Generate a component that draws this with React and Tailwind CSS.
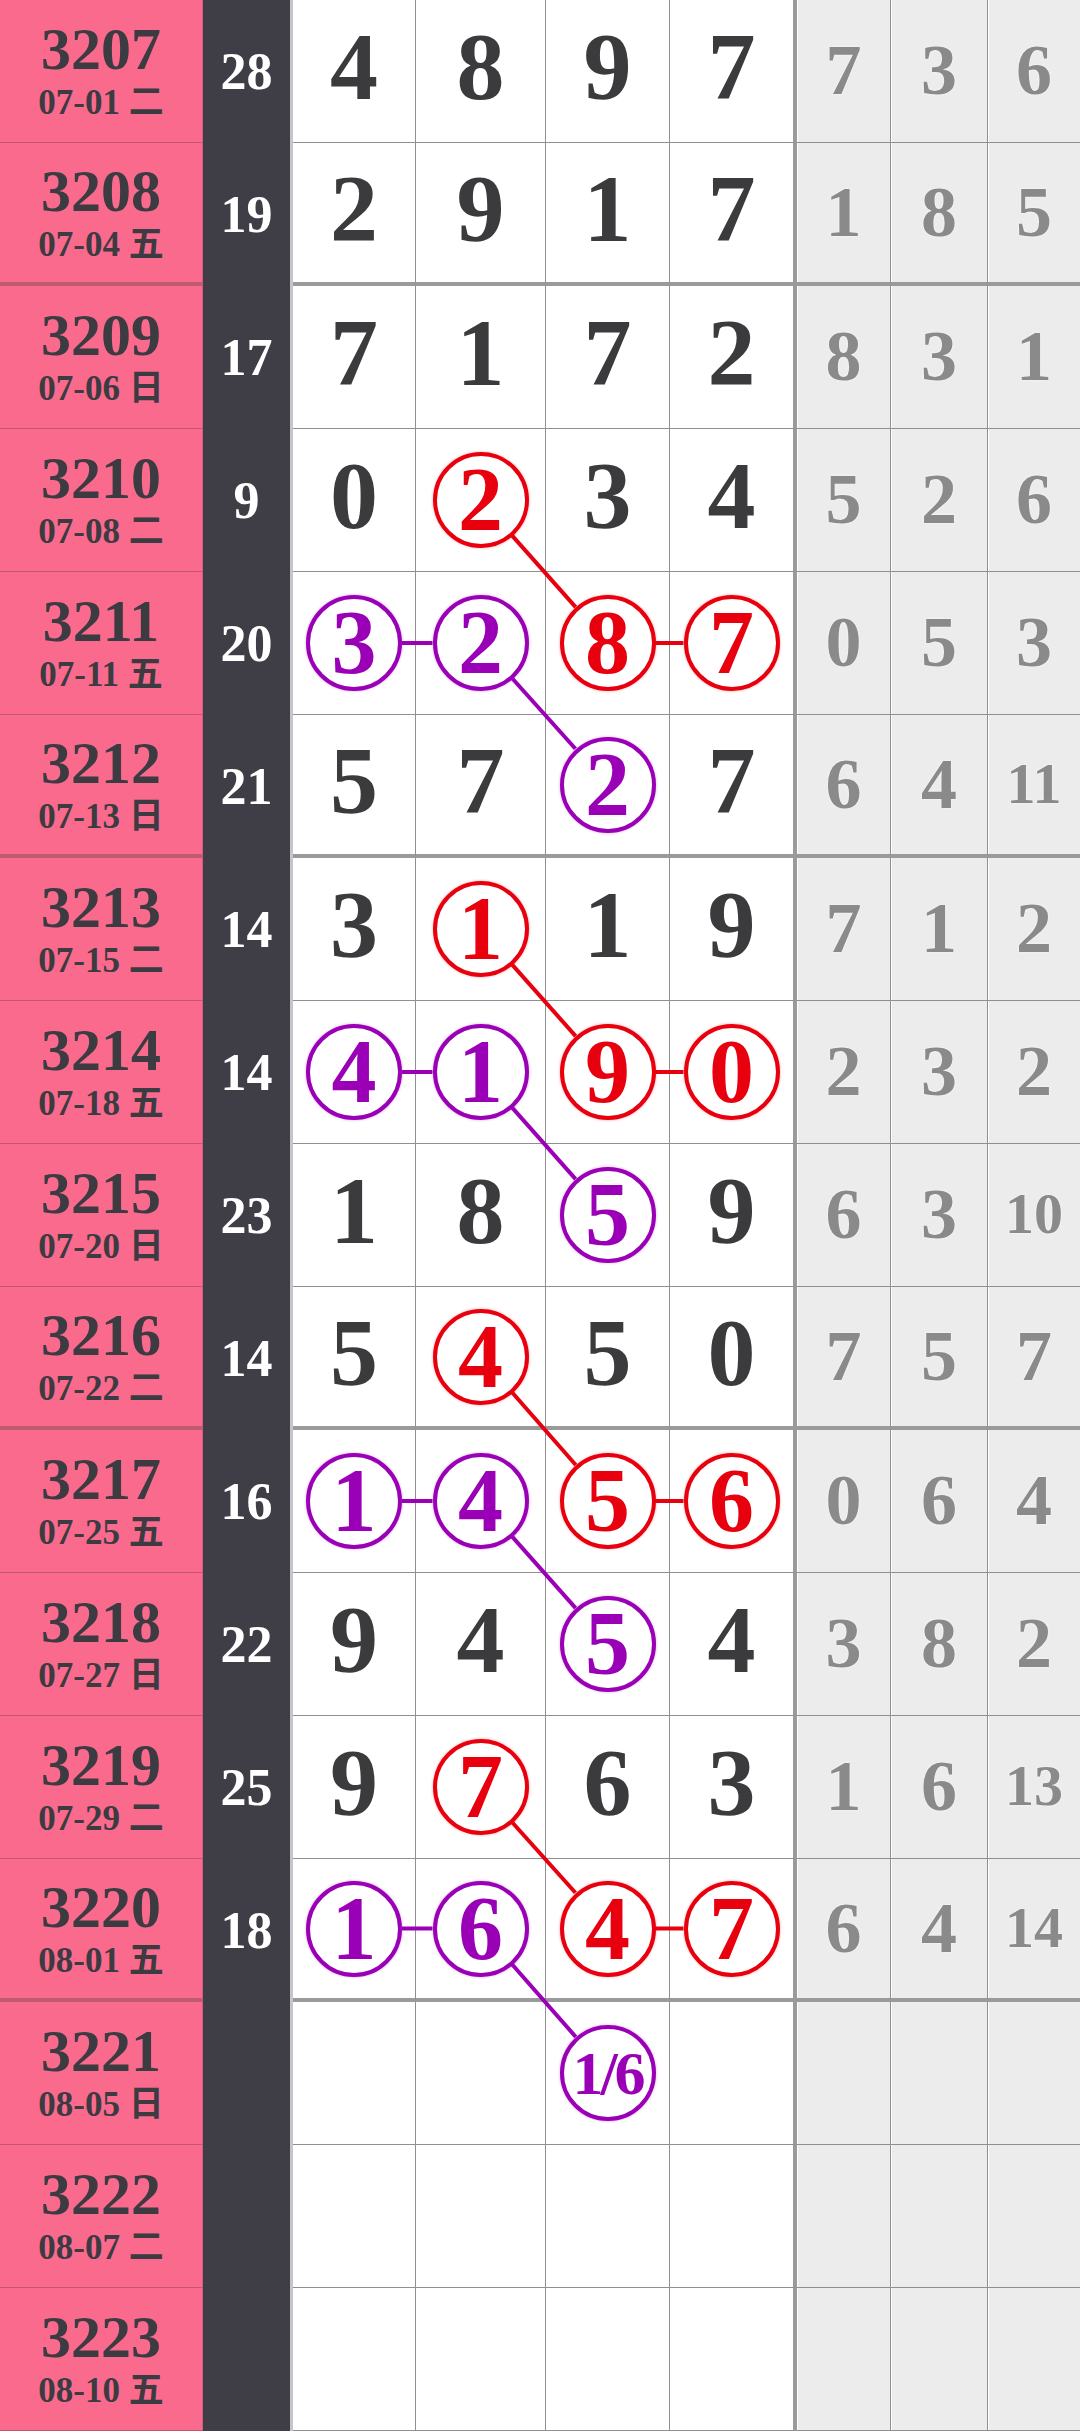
import React from "react";

const ROW_H = 143;

const rows = [
  ["3207", "07-01 二", 28, [4, 8, 9, 7], [7, 3, 6]],
  ["3208", "07-04 五", 19, [2, 9, 1, 7], [1, 8, 5]],
  ["3209", "07-06 日", 17, [7, 1, 7, 2], [8, 3, 1]],
  ["3210", "07-08 二", 9, [0, 2, 3, 4], [5, 2, 6]],
  ["3211", "07-11 五", 20, [3, 2, 8, 7], [0, 5, 3]],
  ["3212", "07-13 日", 21, [5, 7, 2, 7], [6, 4, 11]],
  ["3213", "07-15 二", 14, [3, 1, 1, 9], [7, 1, 2]],
  ["3214", "07-18 五", 14, [4, 1, 9, 0], [2, 3, 2]],
  ["3215", "07-20 日", 23, [1, 8, 5, 9], [6, 3, 10]],
  ["3216", "07-22 二", 14, [5, 4, 5, 0], [7, 5, 7]],
  ["3217", "07-25 五", 16, [1, 4, 5, 6], [0, 6, 4]],
  ["3218", "07-27 日", 22, [9, 4, 5, 4], [3, 8, 2]],
  ["3219", "07-29 二", 25, [9, 7, 6, 3], [1, 6, 13]],
  ["3220", "08-01 五", 18, [1, 6, 4, 7], [6, 4, 14]],
  ["3221", "08-05 日", null, [null, null, null, null], [null, null, null]],
  ["3222", "08-07 二", null, [null, null, null, null], [null, null, null]],
  ["3223", "08-10 五", null, [null, null, null, null], [null, null, null]],
];

const RED = "#e8000e";
const PURPLE = "#9a00b6";

const circles = [];
const links = [];
const groups = [
  { r: 3, red: ["2", "8", "7"], pur: ["3", "2", "2"] },
  { r: 6, red: ["1", "9", "0"], pur: ["4", "1", "5"] },
  { r: 9, red: ["4", "5", "6"], pur: ["1", "4", "5"] },
  { r: 12, red: ["7", "4", "7"], pur: ["1", "6", "1/6"] },
];
groups.forEach(({ r, red, pur }) => {
  circles.push([r, 1, red[0], "red"]);
  circles.push([r + 1, 2, red[1], "red"]);
  circles.push([r + 1, 3, red[2], "red"]);
  circles.push([r + 1, 0, pur[0], "pur"]);
  circles.push([r + 1, 1, pur[1], "pur"]);
  circles.push([r + 2, 2, pur[2], "pur"]);
  links.push([[r, 1], [r + 1, 2], RED]);
  links.push([[r + 1, 2], [r + 1, 3], RED]);
  links.push([[r + 1, 0], [r + 1, 1], PURPLE]);
  links.push([[r + 1, 1], [r + 2, 2], PURPLE]);
});

const colCenters = [354, 480.5, 607.5, 731.5];
const isThick = (i) => i % 4 === 1;
const cy = (r) => r * ROW_H + (isThick(r) ? 69.5 : 71);

function findCircle(r, c) {
  return circles.find((x) => x[0] === r && x[1] === c);
}

const whiteWidths = ["w-[123px]", "w-[130px]", "w-[124px]", "w-[127px]"];
const grayWidths = ["w-[94px]", "w-[97px]", "w-[92px]"];

function Circle({ text, color }) {
  const small = text.length > 1;
  return (
    <div
      className={
        color === "red"
          ? "flex w-[96px] h-[96px] items-center justify-center rounded-full border-[4px] border-[#e8000e] bg-white text-[#e8000e] shadow-[0_0_3px_rgba(232,0,14,0.35)]"
          : "flex w-[96px] h-[96px] items-center justify-center rounded-full border-[4px] border-[#9a00b6] bg-white text-[#9a00b6] shadow-[0_0_3px_rgba(154,0,182,0.35)]"
      }
    >
      <span
        className={
          small
            ? "text-[62px] leading-none font-bold tracking-[-3px]"
            : "text-[90px] leading-none font-bold"
        }
      >
        {text}
      </span>
    </div>
  );
}

function Row({ data, i }) {
  const [period, date, sum, nums, gray] = data;
  const thick = isThick(i);
  const pinkB = thick
    ? "border-b-[4px] border-b-[#bf5a73]"
    : "border-b border-b-[#c2566f]";
  const cellB = thick
    ? "border-b-[4px] border-b-[#9a9a9a]"
    : "border-b border-b-[#8f8f8f]";
  return (
    <div className="flex h-[143px]">
      <div
        className={
          "box-border flex w-[203px] flex-col items-center justify-center border-r border-r-[#d9587a] bg-[#fa6a8d] pt-[2px] text-[#3c3b42] " +
          pinkB
        }
      >
        <div className="text-[60px] leading-[56px] font-bold">{period}</div>
        <div className="mt-[6px] text-[35px] leading-[40px] font-bold whitespace-nowrap">
          {date}
        </div>
      </div>
      <div className="box-border flex w-[90px] items-center justify-center border-r-[3px] border-r-[#c6c6c8] bg-[#3f3e47] text-[52px] font-bold text-white">
        {sum}
      </div>
      {nums.map((n, c) => {
        const circ = findCircle(i, c);
        return (
          <div
            key={c}
            className={
              "box-border flex items-center justify-center bg-white " +
              whiteWidths[c] +
              " " +
              (c === 3
                ? "border-r-[4px] border-r-[#9a9a9a] "
                : "border-r border-r-[#8f8f8f] ") +
              cellB
            }
          >
            {circ ? (
              <Circle text={circ[2]} color={circ[3]} />
            ) : n !== null ? (
              <span className="pb-[8px] text-[96px] leading-none font-bold text-[#3b3b3d]">
                {n}
              </span>
            ) : null}
          </div>
        );
      })}
      {gray.map((g, c) => (
        <div
          key={c}
          className={
            "box-border flex items-center justify-center bg-[#ececec] shadow-[inset_1px_0_0_#ffffff] " +
            grayWidths[c] +
            " " +
            (c < 2 ? "border-r border-r-[#8f8f8f] " : "") +
            cellB
          }
        >
          {g !== null ? (
            <span
              className={
                g >= 10
                  ? "pb-[2px] text-[58px] leading-none font-bold text-[#8a8a8a] [text-shadow:0_0_2px_#ffffff]"
                  : "pb-[2px] text-[72px] leading-none font-bold text-[#8a8a8a] [text-shadow:0_0_2px_#ffffff]"
              }
            >
              {g}
            </span>
          ) : null}
        </div>
      ))}
    </div>
  );
}

export default function App() {
  const R = 48;
  return (
    <div className="relative h-[2432px] w-[1080px] overflow-hidden bg-white font-['Liberation_Serif','Noto_Sans_CJK_SC',serif]">
      <div className="flex flex-col">
        {rows.map((d, i) => (
          <Row key={i} data={d} i={i} />
        ))}
      </div>
      <svg
        className="pointer-events-none absolute left-0 top-0"
        width="1080"
        height="2432"
        viewBox="0 0 1080 2432"
      >
        {links.map(([[r1, c1], [r2, c2], col], k) => {
          const x1 = colCenters[c1];
          const y1 = cy(r1);
          const x2 = colCenters[c2];
          const y2 = cy(r2);
          const dx = x2 - x1;
          const dy = y2 - y1;
          const len = Math.hypot(dx, dy);
          const ux = dx / len;
          const uy = dy / len;
          return (
            <line
              key={k}
              x1={x1 + ux * R}
              y1={y1 + uy * R}
              x2={x2 - ux * R}
              y2={y2 - uy * R}
              stroke={col}
              strokeWidth="4"
            />
          );
        })}
      </svg>
    </div>
  );
}
